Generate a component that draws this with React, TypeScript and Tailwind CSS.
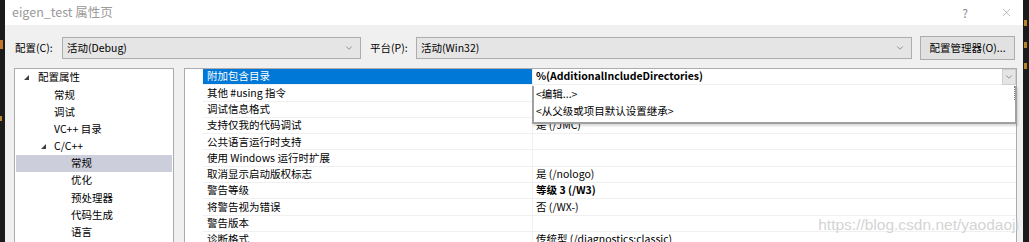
import { ChevronDown, X } from "lucide-react";

const treeItems = [
  { label: "配置属性", indent: 0, arrow: true },
  { label: "常规", indent: 1 },
  { label: "调试", indent: 1 },
  { label: "VC++ 目录", indent: 1 },
  { label: "C/C++", indent: 1, arrow: true },
  { label: "常规", indent: 2, selected: true },
  { label: "优化", indent: 2 },
  { label: "预处理器", indent: 2 },
  { label: "代码生成", indent: 2 },
  { label: "语言", indent: 2 },
];

const props = [
  { name: "附加包含目录", value: "" },
  { name: "其他 #using 指令", value: "" },
  { name: "调试信息格式", value: "" },
  { name: "支持仅我的代码调试", value: "是 (/JMC)" },
  { name: "公共语言运行时支持", value: "" },
  { name: "使用 Windows 运行时扩展", value: "" },
  { name: "取消显示启动版权标志", value: "是 (/nologo)" },
  { name: "警告等级", value: "等级 3 (/W3)", bold: true },
  { name: "将警告视为错误", value: "否 (/WX-)" },
  { name: "警告版本", value: "" },
  { name: "诊断格式", value: "传统型 (/diagnostics:classic)" },
];

const indentClass = ["pl-[22px]", "pl-[38px]", "pl-[55px]"];
const arrowClass = ["left-[8px]", "left-[25px]"];

function Combo({ text, width }: { text: string; width: string }) {
  return (
    <div className={`${width} h-[22px] bg-[#e5e5e5] border border-[#adadad] flex items-center justify-between pl-[4px] pr-[6px]`}>
      <span>{text}</span>
      <ChevronDown className="w-[10px] h-[10px] text-[#606060]" strokeWidth={1.5} />
    </div>
  );
}

export default function App() {
  return (
    <div className="w-[1029px] h-[242px] overflow-hidden flex bg-[#1b1b1b] font-['Noto_Sans_CJK_SC',sans-serif] text-[10.5px] text-black leading-none">
      {/* dark editor edge */}
      <div className="w-[5px] shrink-0 relative">
        <div className="absolute left-0 top-[40px] w-[3px] h-[9px] bg-[#c0762a]" />
        <div className="absolute left-0 top-[116px] w-[2px] h-[5px] bg-[#b8862f]" />
      </div>

      <div className="w-[1018px] shrink-0 flex flex-col bg-[#f0f0f0] overflow-hidden">
        {/* title bar */}
        <div className="h-[25px] shrink-0 bg-white flex items-center justify-between pl-[7px] pr-[10px]">
          <span className="text-[12.5px] text-[#9a9a9a]">eigen_test 属性页</span>
          <div className="flex items-center gap-[32px] text-[#8a8a8a]">
            <span className="text-[12px]">?</span>
            <X className="w-[13px] h-[13px]" strokeWidth={1} />
          </div>
        </div>

        {/* config row */}
        <div className="shrink-0 flex items-center h-[22px] mt-[12px] pl-[10px]">
          <span className="w-[47px]">配置(C):</span>
          <Combo text="活动(Debug)" width="w-[299px]" />
          <span className="ml-[9px] w-[46px]">平台(P):</span>
          <Combo text="活动(Win32)" width="w-[496px]" />
          <div className="ml-[8px] w-[95px] h-[24px] bg-[#e1e1e1] border border-[#adadad] flex items-center justify-center">
            配置管理器(O)...
          </div>
        </div>

        {/* panels */}
        <div className="shrink-0 flex mt-[9px] pl-[9px] gap-[10px] h-[200px]">
          {/* tree */}
          <div className="w-[160px] bg-white border border-[#acacac] border-b-0">
            {treeItems.map((item, i) => (
              <div
                key={i}
                className={`relative h-[17.2px] flex items-center mx-[1px] ${indentClass[item.indent]} ${item.selected ? "bg-[#cccedb]" : ""}`}
              >
                {item.arrow && (
                  <span className={`absolute ${arrowClass[item.indent]} top-[6px] w-0 h-0 border-l-[5px] border-l-transparent border-b-[5px] border-b-[#404040]`} />
                )}
                {item.label}
              </div>
            ))}
          </div>

          {/* property grid */}
          <div className="relative w-[833px] bg-white border border-[#acacac] border-b-0 flex">
            <div className="w-[18px]" />
            <div className="flex-1">
              {props.map((p, i) => (
                <div key={i} className="flex h-[16.3px] border-b border-[#f0f0f0]">
                  <div
                    className={`w-[329px] flex items-center pl-[4px] ${i === 0 ? "bg-[#0078d7] text-white" : ""}`}
                  >
                    {p.name}
                  </div>
                  <div className={`flex-1 flex items-center pl-[3px] border-l border-[#f0f0f0] ${p.bold ? "font-bold" : ""}`}>
                    {i === 0 ? (
                      <div className="flex-1 h-full flex items-center justify-between font-bold">
                        <span>%(AdditionalIncludeDirectories)</span>
                        <div className="w-[14px] h-[16px] bg-[#e5e5e5] border border-[#cfcfcf] flex items-center justify-center">
                          <ChevronDown className="w-[10px] h-[10px] text-[#606060]" strokeWidth={1.5} />
                        </div>
                      </div>
                    ) : (
                      p.value
                    )}
                  </div>
                </div>
              ))}
            </div>

            {/* dropdown list */}
            <div className="absolute left-[347px] top-[17px] w-[485px] h-[38px] bg-white border-2 border-[#a0a0a0] border-t-0 shadow-[1px_2px_2px_rgba(0,0,0,0.15)] pl-[2px]">
              <div className="h-[17px] flex items-center">&lt;编辑...&gt;</div>
              <div className="h-[17px] flex items-center">&lt;从父级或项目默认设置继承&gt;</div>
              <div className="absolute right-0 top-0 h-[14px] border-r border-dotted border-[#808080]" />
            </div>

            {/* watermark */}
            <div className="absolute right-[-3px] top-[148px] text-[15.5px] text-[#d4d4d4] font-['Liberation_Sans',sans-serif]">
              https://blog.csdn.net/yaodaoji
            </div>
          </div>
        </div>
      </div>

      <div className="w-[6px] shrink-0 relative">
        <div className="absolute left-[1px] top-[20px] w-[3px] h-[6px] bg-[#b8862f]" />
        <div className="absolute left-[1px] top-[42px] w-[3px] h-[6px] bg-[#b8862f]" />
        <div className="absolute left-[1px] top-[63px] w-[3px] h-[6px] bg-[#b8862f]" />
      </div>
    </div>
  );
}
